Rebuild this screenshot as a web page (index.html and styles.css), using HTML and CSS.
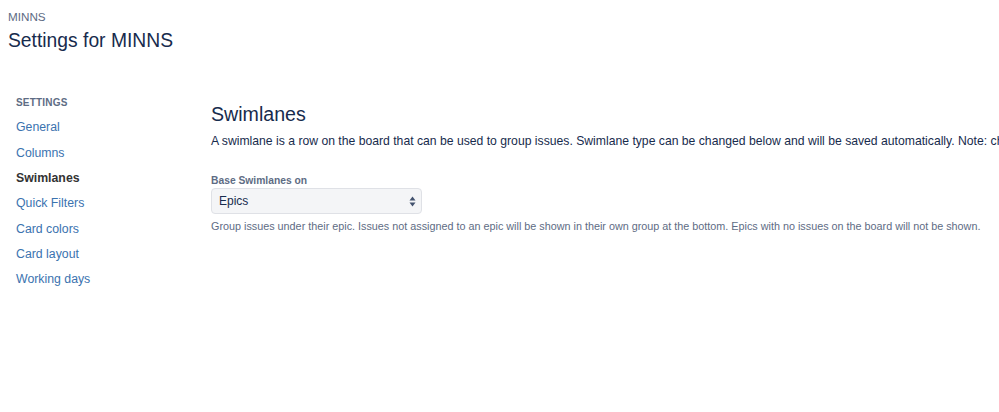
FILE: index.html
```html
<!DOCTYPE html>
<html>
<head>
<meta charset="utf-8">
<link rel="stylesheet" href="styles.css">
</head>
<body>
<header class="page-header">
  <div class="crumb">MINNS</div>
  <h1 class="title">Settings for MINNS</h1>
</header>
<div class="layout">
  <nav class="sidebar">
    <div class="side-heading">SETTINGS</div>
    <ul class="side-list">
      <li><a class="side-link" href="#">General</a></li>
      <li><a class="side-link" href="#">Columns</a></li>
      <li><span class="side-link active">Swimlanes</span></li>
      <li><a class="side-link" href="#">Quick Filters</a></li>
      <li><a class="side-link" href="#">Card colors</a></li>
      <li><a class="side-link" href="#">Card layout</a></li>
      <li><a class="side-link" href="#">Working days</a></li>
    </ul>
  </nav>
  <main class="content">
    <h2 class="section-title">Swimlanes</h2>
    <p class="intro">A swimlane is a row on the board that can be used to group issues. Swimlane type can be changed below and will be saved automatically. Note: changing the swimlane type will affect all users of this board.</p>
    <div class="field">
      <label class="field-label">Base Swimlanes on</label>
      <div class="select">
        <span class="select-value">Epics</span>
        <svg class="select-arrows" width="7" height="11" viewBox="0 0 7 11"><path d="M3.5 0.5 L6.5 4.5 L0.5 4.5 Z" fill="#42526e"/><path d="M3.5 10.5 L6.5 6.5 L0.5 6.5 Z" fill="#42526e"/></svg>
      </div>
      <div class="help">Group issues under their epic. Issues not assigned to an epic will be shown in their own group at the bottom. Epics with no issues on the board will not be shown.</div>
    </div>
  </main>
</div>
</body>
</html>
```

FILE: styles.css
```css
html, body {
  margin: 0;
  padding: 0;
  overflow: hidden;
}
body {
  background: #fff;
  font-family: "Liberation Sans", Arial, sans-serif;
  color: #172b4d;
  width: 999px;
  height: 412px;
}
.page-header {
  padding: 9px 8px 0 8px;
}
.crumb {
  font-size: 11.7px;
  line-height: 16px;
  color: #5e6c84;
}
.title {
  margin: 2px 0 0 0;
  font-size: 19.3px;
  line-height: 28px;
  font-weight: 400;
  color: #172b4d;
}
.layout {
  display: flex;
  margin-top: 40px;
}
.sidebar {
  width: 195px;
  flex: none;
  padding-left: 16px;
}
.side-heading {
  font-size: 10px;
  font-weight: 700;
  line-height: 16px;
  color: #5e6c84;
  letter-spacing: 0.2px;
}
.side-list {
  list-style: none;
  margin: 4.3px 0 0 0;
  padding: 0;
}
.side-list li {
  height: 25.33px;
  line-height: 25.33px;
  font-size: 12.3px;
}
.side-link {
  color: #3b73af;
  text-decoration: none;
}
.side-link.active {
  color: #333333;
  font-weight: 700;
}
.content {
  flex: none;
  width: 1400px;
  padding-top: 7px;
}
.section-title {
  margin: 0;
  font-size: 19.6px;
  line-height: 24px;
  font-weight: 400;
  color: #172b4d;
}
.intro {
  margin: 6px 0 0 0;
  font-size: 12.2px;
  line-height: 18px;
  white-space: nowrap;
  color: #172b4d;
}
.field {
  margin-top: 24px;
}
.field-label {
  display: block;
  font-size: 10.3px;
  font-weight: 700;
  line-height: 14px;
  color: #5e6c84;
}
.select {
  box-sizing: border-box;
  width: 211px;
  height: 26px;
  background: #f4f5f7;
  border: 1px solid #dfe1e6;
  border-radius: 4px;
  display: flex;
  align-items: center;
  justify-content: space-between;
  padding: 0 5px 0 7px;
}
.select-value {
  font-size: 12px;
  color: #172b4d;
}
.select-arrows {
  display: block;
}
.help {
  margin-top: 5px;
  font-size: 10.8px;
  line-height: 14px;
  color: #5e6c84;
  white-space: nowrap;
}
```
